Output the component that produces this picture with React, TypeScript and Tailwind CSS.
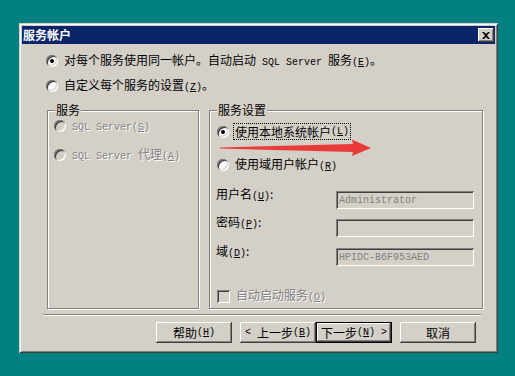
import type { ReactNode } from 'react'

const raised =
  'shadow-[inset_-1px_-1px_0_#404040,inset_1px_1px_0_#fff,inset_-2px_-2px_0_#808080,inset_2px_2px_0_#d4d0c8]'
const sunken =
  'shadow-[inset_1px_1px_0_#808080,inset_-1px_-1px_0_#fff,inset_2px_2px_0_#404040,inset_-2px_-2px_0_#d4d0c8]'
const etched = 'border border-[#808080] shadow-[inset_1px_1px_0_#fff,1px_1px_0_#fff]'
const disabled = 'text-[#808080] [text-shadow:1px_1px_0_#fff]'

function M({ children }: { children: ReactNode }) {
  return <span className="font-['Liberation_Mono',monospace] text-[10px] whitespace-pre">{children}</span>
}

function Key({ k }: { k: string }) {
  return (
    <M>
      (<u>{k}</u>)
    </M>
  )
}

function Radio({ checked, off }: { checked?: boolean; off?: boolean }) {
  return (
    <span
      className={`w-3 h-3 shrink-0 rounded-full flex items-center justify-center ${sunken} ${
        off ? 'bg-[#d4d0c8]' : 'bg-white'
      }`}
    >
      {checked && <span className="w-1 h-1 rounded-full bg-black" />}
    </span>
  )
}

function Group({ label, className, children }: { label: string; className: string; children: ReactNode }) {
  return (
    <div className={`relative ${etched} ${className}`}>
      <span className="absolute -top-[9px] left-[7px] px-[1px] bg-[#d4d0c8] leading-4">{label}</span>
      {children}
    </div>
  )
}

function Field({ label, value, className }: { label: ReactNode; value?: string; className: string }) {
  return (
    <div className={`flex items-start pl-[6px] ${className}`}>
      <span className="w-[120px] -mt-[5px] leading-4">{label}</span>
      <div className={`w-[138px] h-[18px] bg-[#d4d0c8] pl-[3px] flex items-center ${sunken}`}>
        <span className="font-['Liberation_Mono',monospace] text-[10px] text-[#808080]">{value}</span>
      </div>
    </div>
  )
}

function Button({ children, def, className = '' }: { children: ReactNode; def?: boolean; className?: string }) {
  return (
    <div className={`w-[76px] h-[21px] ${def ? 'border border-black' : ''} ${className}`}>
      <div className={`w-full h-full flex items-center justify-center leading-4 ${raised}`}>{children}</div>
    </div>
  )
}

export default function App() {
  return (
    <div className="relative w-[515px] h-[376px] overflow-hidden bg-[#008080] pt-[23px] pl-[19px] font-['Noto_Sans_CJK_SC',sans-serif] text-[12px] text-black">
      <div className={`w-[479px] h-[330px] bg-[#d4d0c8] p-[3px] flex flex-col shadow-[inset_1px_1px_0_#d4d0c8,inset_-1px_-1px_0_#404040,inset_2px_2px_0_#fff,inset_-2px_-2px_0_#808080]`}>
        {/* title bar */}
        <div className="h-[18px] bg-[#0a246a] flex items-center justify-between pl-[1px] pr-[1px]">
          <span className="text-white font-bold leading-4">服务帐户</span>
          <div className={`w-4 h-[14px] bg-[#d4d0c8] flex items-center justify-center ${raised}`}>
            <svg width="8" height="7" viewBox="0 0 8 7">
              <path d="M0 0h2l2 2 2-2h2L5 3.5 8 7H6L4 5 2 7H0l3-3.5z" fill="#000" />
            </svg>
          </div>
        </div>

        <div className="flex flex-col">
          <div className="mt-[9px] ml-[24px] h-4 flex items-center gap-[6px] leading-4">
            <Radio checked />
            <span>
              对每个服务使用同一帐户。自动启动<M> SQL Server </M>服务<Key k="E" />。
            </span>
          </div>
          <div className="mt-[9px] ml-[24px] h-4 flex items-center gap-[6px] leading-4">
            <Radio />
            <span>
              自定义每个服务的设置<Key k="Z" />。
            </span>
          </div>

          <div className="mt-[16px] ml-[25px] h-[199px] flex gap-[10px]">
            <Group label="服务" className="w-[152px]">
              <div className={`pt-[7px] pl-[6px] flex flex-col gap-[13px] ${disabled}`}>
                <div className="h-4 flex items-center gap-[6px] leading-4">
                  <Radio off />
                  <span>
                    <M>SQL Server</M>
                    <Key k="S" />
                  </span>
                </div>
                <div className="h-4 flex items-center gap-[6px] leading-4">
                  <Radio off />
                  <span>
                    <M>SQL Server </M>代理<Key k="A" />
                  </span>
                </div>
              </div>
            </Group>

            <Group label="服务设置" className="w-[274px]">
              <div className="flex flex-col">
                <div className="mt-[12px] pl-[7px] h-[17px] flex items-center gap-[4px]">
                  <Radio checked />
                  <span className="h-[17px] px-[1px] border border-dotted border-black flex items-center leading-4">
                    使用本地系统帐户<Key k="L" />
                  </span>
                </div>
                <div className="mt-[17px] pl-[7px] h-4 flex items-center gap-[6px] leading-4">
                  <Radio />
                  <span>
                    使用域用户帐户<Key k="R" />
                  </span>
                </div>
                <Field
                  className="mt-[18px]"
                  label={
                    <>
                      用户名<Key k="U" />:
                    </>
                  }
                  value="Administrator"
                />
                <Field
                  className="mt-[10px]"
                  label={
                    <>
                      密码<Key k="P" />:
                    </>
                  }
                />
                <Field
                  className="mt-[11px]"
                  label={
                    <>
                      域<Key k="D" />:
                    </>
                  }
                  value="HPIDC-B6F953AED"
                />
                <div className="mt-[21px] pl-[7px] flex items-center gap-[6px]">
                  <span className={`w-[13px] h-[13px] bg-[#d4d0c8] ${sunken}`} />
                  <span className={`leading-4 ${disabled}`}>
                    自动启动服务<Key k="O" />
                  </span>
                </div>
              </div>
            </Group>
          </div>

          <div className="mt-[5px] ml-[21px] w-[438px] h-[2px] border-t border-t-[#808080] border-b border-b-white" />

          <div className="mt-[6px] ml-[134px] flex">
            <Button>
              帮助<Key k="H" />
            </Button>
            <Button className="ml-[8px]">
              <M>{'< '}</M>上一步<Key k="B" />
            </Button>
            <Button def>
              下一步<Key k="N" />
              <M>{' >'}</M>
            </Button>
            <Button className="ml-[8px]">取消</Button>
          </div>
        </div>
      </div>

      {/* red annotation arrow */}
      <svg className="absolute left-0 top-0" width="515" height="376" viewBox="0 0 515 376">
        <polygon
          points="220,147.5 353,144 352,139.5 371,148 352,156 353,152 220,148.5"
          fill="#ea3b3b"
        />
      </svg>
    </div>
  )
}
